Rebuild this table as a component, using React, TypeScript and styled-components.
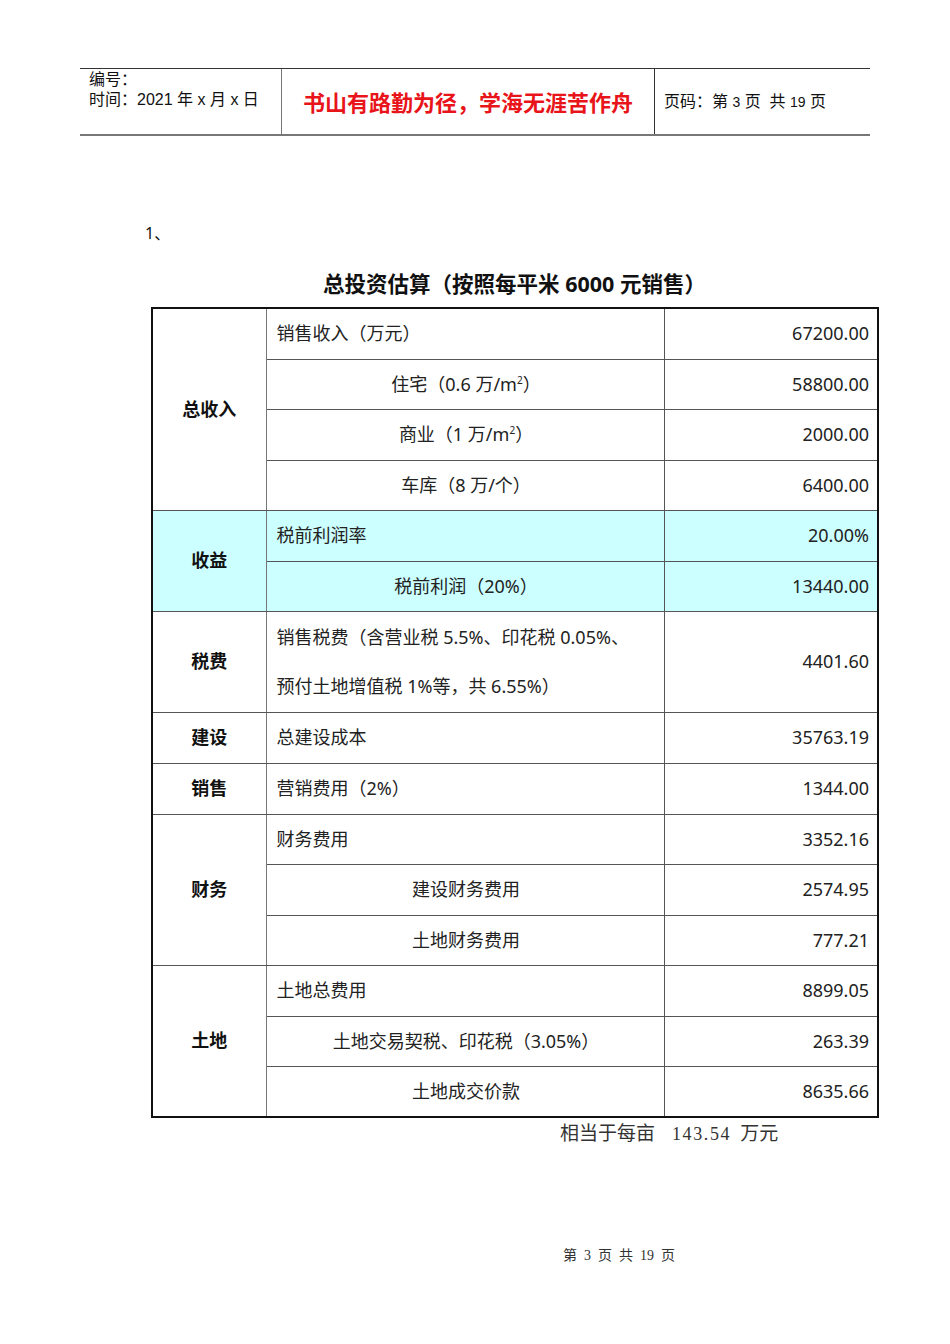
import React from 'react';
import styled, { createGlobalStyle } from 'styled-components';

const GlobalStyle = createGlobalStyle`
  html, body {
    margin: 0;
    padding: 0;
    background: #fff;
  }
  body {
    font-family: "Noto Sans", "Noto Sans CJK SC", sans-serif;
    color: #111;
  }
`;

const Page = styled.div`
  width: 950px;
  height: 1344px;
  position: relative;
  padding-top: 68px;
  box-sizing: border-box;
`;

const Header = styled.div`
  margin-left: 80px;
  width: 790px;
  height: 68px;
  box-sizing: border-box;
  border-top: 1px solid #333;
  border-bottom: 2px solid #777;
  display: grid;
  grid-template-columns: 201px 373px 216px;
`;

const HeaderCell = styled.div<{ $divider?: string }>`
  font-family: "Liberation Sans", "Noto Sans CJK SC", sans-serif;
  font-size: 16px;
  line-height: 20px;
  color: #111;
  border-left: ${p => (p.$divider ? `1px solid ${p.$divider}` : 'none')};
  display: flex;
  flex-direction: column;
`;

const Meta = styled(HeaderCell)`
  padding: 1px 0 0 9px;
`;

const Motto = styled(HeaderCell)`
  align-items: center;
  justify-content: center;
  padding-top: 4px;
  font-size: 22px;
  font-weight: 700;
  color: #e8141a;
`;

const PageNo = styled(HeaderCell)`
  justify-content: center;
  padding: 0 0 0 9px;
`;

const Small = styled.span`
  font-size: 14px;
`;

const Numbering = styled.div`
  margin: 86px 0 0 145px;
  font-size: 16px;
  line-height: 22px;
`;

const Title = styled.h1`
  margin: 26px 0 0 151px;
  width: 727px;
  text-align: center;
  font-size: 21.5px;
  font-weight: 700;
  line-height: 28px;
  color: #111;
`;

const Table = styled.table`
  margin: 9px 0 0 151px;
  width: 726px;
  border-collapse: collapse;
  border: 2px solid #111;
  table-layout: fixed;
  font-size: 18px;
  color: #222;
`;

const Row = styled.tr<{ $tint?: boolean; $h: number }>`
  height: ${p => p.$h}px;
  background: ${p => (p.$tint ? '#ccffff' : '#fff')};
`;

const Cell = styled.td<{ $align?: 'left' | 'center' | 'right' }>`
  border: 1px solid #555;
  padding: 0 8px 0 10px;
  text-align: ${p => p.$align ?? 'left'};
  vertical-align: middle;
  line-height: 49px;
  white-space: nowrap;
`;

const Category = styled(Cell)`
  text-align: center;
  font-weight: 700;
  color: #111;
  padding: 0;
  border-right-color: #777;
`;

const Value = styled(Cell)`
  text-align: right;
  padding-right: 8px;
`;

const Note = styled.div`
  margin: 3px 0 0 560px;
  font-family: "Liberation Serif", "Noto Sans CJK SC", serif;
  font-size: 19px;
  line-height: 26px;
  color: #333;
  white-space: pre;
`;

const Figure = styled.span`
  font-family: "Liberation Serif", serif;
  font-size: 18px;
  letter-spacing: 1.6px;
  padding: 0 9px 0 17px;
`;

const Footer = styled.div`
  position: absolute;
  top: 1246px;
  left: 563px;
  font-family: "Liberation Serif", "Noto Sans CJK SC", serif;
  font-size: 14px;
  line-height: 20px;
  color: #333;
  white-space: pre;
`;

type Line = { label: React.ReactNode; value: string; align?: 'left' | 'center'; span?: number };

type Group = { name: string; tint?: boolean; lines: Line[] };

const sq = <sup style={{ fontSize: '10px', lineHeight: 0 }}>2</sup>;

const groups: Group[] = [
  {
    name: '总收入',
    lines: [
      { label: '销售收入（万元）', value: '67200.00' },
      { label: <>住宅（0.6 万/m{sq}）</>, value: '58800.00', align: 'center' },
      { label: <>商业（1 万/m{sq}）</>, value: '2000.00', align: 'center' },
      { label: '车库（8 万/个）', value: '6400.00', align: 'center' }
    ]
  },
  {
    name: '收益',
    tint: true,
    lines: [
      { label: '税前利润率', value: '20.00%' },
      { label: '税前利润（20%）', value: '13440.00', align: 'center' }
    ]
  },
  {
    name: '税费',
    lines: [
      {
        label: (
          <>
            销售税费（含营业税 5.5%、印花税 0.05%、
            <br />
            预付土地增值税 1%等，共 6.55%）
          </>
        ),
        value: '4401.60',
        span: 2
      }
    ]
  },
  { name: '建设', lines: [{ label: '总建设成本', value: '35763.19' }] },
  { name: '销售', lines: [{ label: '营销费用（2%）', value: '1344.00' }] },
  {
    name: '财务',
    lines: [
      { label: '财务费用', value: '3352.16' },
      { label: '建设财务费用', value: '2574.95', align: 'center' },
      { label: '土地财务费用', value: '777.21', align: 'center' }
    ]
  },
  {
    name: '土地',
    lines: [
      { label: '土地总费用', value: '8899.05' },
      { label: '土地交易契税、印花税（3.05%）', value: '263.39', align: 'center' },
      { label: '土地成交价款', value: '8635.66', align: 'center' }
    ]
  }
];

// one text line of the table is 50.56px tall; spread the fraction over the rows
const UNIT = 50.56;

const rows = (() => {
  let units = 0;
  return groups.flatMap(g =>
    g.lines.map((line, i) => {
      const span = line.span ?? 1;
      const h = Math.round((units + span) * UNIT) - Math.round(units * UNIT);
      units += span;
      return { g, line, i, h };
    })
  );
})();

const App = () => (
  <Page>
    <GlobalStyle />
    <Header>
      <Meta>
        <span>编号：</span>
        <span>时间：2021 年 x 月 x 日</span>
      </Meta>
      <Motto $divider="#777">书山有路勤为径，学海无涯苦作舟</Motto>
      <PageNo $divider="#333">
        <span>
          页码：第 <Small>3</Small> 页&nbsp;&nbsp;共 <Small>19</Small> 页
        </span>
      </PageNo>
    </Header>

    <Numbering>1、</Numbering>
    <Title>总投资估算（按照每平米 6000 元销售）</Title>

    <Table>
      <colgroup>
        <col style={{ width: 114 }} />
        <col style={{ width: 398 }} />
        <col style={{ width: 214 }} />
      </colgroup>
      <tbody>
        {rows.map(({ g, line, i, h }) => (
          <Row key={`${g.name}-${i}`} $tint={g.tint} $h={h}>
            {i === 0 && <Category rowSpan={g.lines.length}>{g.name}</Category>}
            <Cell $align={line.align}>{line.label}</Cell>
            <Value>{line.value}</Value>
          </Row>
        ))}
      </tbody>
    </Table>

    <Note>
      相当于每亩<Figure>143.54</Figure>万元
    </Note>
    <Footer>第  3  页  共  19  页</Footer>
  </Page>
);

export default App;
